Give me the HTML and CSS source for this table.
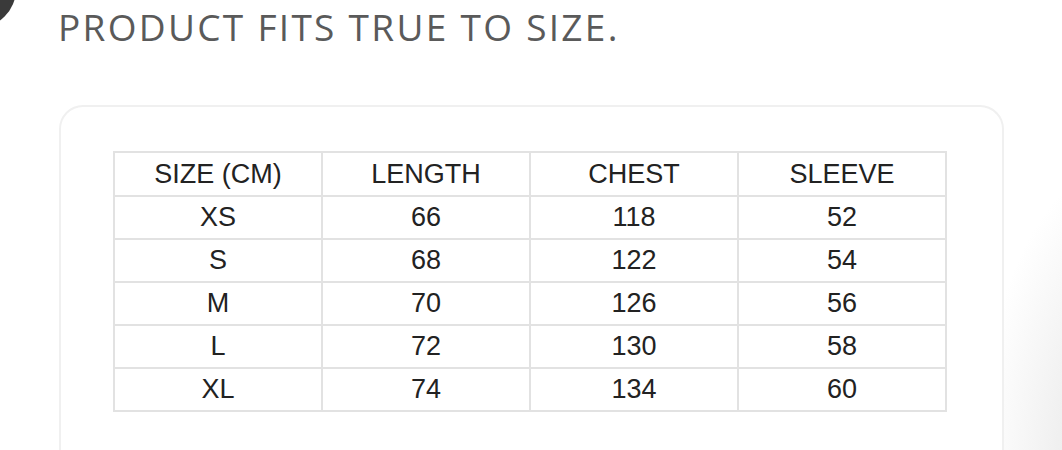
FILE: index.html
```html
<!DOCTYPE html>
<html>
<head>
<meta charset="utf-8">
<link rel="stylesheet" href="styles.css">
</head>
<body>
<div class="corner"></div>
<h1 class="title">PRODUCT FITS TRUE TO SIZE.</h1>
<div class="card">
  <table class="chart">
    <tr><td>SIZE (CM)</td><td>LENGTH</td><td>CHEST</td><td>SLEEVE</td></tr>
    <tr><td>XS</td><td>66</td><td>118</td><td>52</td></tr>
    <tr><td>S</td><td>68</td><td>122</td><td>54</td></tr>
    <tr><td>M</td><td>70</td><td>126</td><td>56</td></tr>
    <tr><td>L</td><td>72</td><td>130</td><td>58</td></tr>
    <tr><td>XL</td><td>74</td><td>134</td><td>60</td></tr>
  </table>
</div>
</body>
</html>
```
FILE: styles.css
```css
html, body {
  margin: 0;
  padding: 0;
  height: 100%;
  overflow: hidden;
}
body {
  background:
    radial-gradient(ellipse 150px 300px at 1130px 460px, #dedede 0%, #efefef 45%, rgba(255,255,255,0) 100%),
    #ffffff;
  position: relative;
}
.corner {
  position: absolute;
  left: -62px;
  top: -50px;
  width: 78px;
  height: 78px;
  border-radius: 50%;
  background: #3a3a3a;
}
.title {
  margin: 0;
  padding: 4px 0 0 58px;
  font-family: "Open Sans", sans-serif;
  font-weight: 400;
  font-size: 37px;
  line-height: 46px;
  letter-spacing: 2.3px;
  color: #5a5a5a;
}
.card {
  margin: 55px 0 0 59px;
  width: 945px;
  height: 345px;
  border: 2px solid #f0f0f0;
  border-bottom: none;
  border-radius: 24px 24px 0 0;
  padding-top: 44px;
  box-sizing: border-box;
  background: #ffffff;
}
.chart {
  margin-left: 52px;
  border-collapse: collapse;
  font-family: "Liberation Sans", Arial, sans-serif;
  font-size: 27px;
  color: #222222;
}
.chart td {
  border: 2px solid #e2e2e2;
  width: 206px;
  height: 41px;
  padding: 0;
  text-align: center;
  vertical-align: middle;
}
.chart tr:first-child td {
  height: 42px;
}
```
